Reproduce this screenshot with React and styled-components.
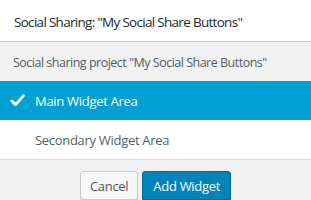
import React from 'react';
import styled, { createGlobalStyle } from 'styled-components';

const GlobalStyle = createGlobalStyle`
  html, body {
    margin: 0;
    padding: 0;
    background: #f1f1f1;
  }
  body {
    font-family: "Open Sans", "Noto Sans", sans-serif;
  }
`;

const Panel = styled.div`
  width: 311px;
  height: 200px;
  display: flex;
  flex-direction: column;
  background: #f1f1f1;
  overflow: hidden;
`;

const Header = styled.div`
  height: 42px;
  box-sizing: border-box;
  display: flex;
  align-items: center;
  padding: 2px 14px 0;
  background: #fff;
  border-bottom: 1px solid #c4c4c4;
  color: #23282d;
  font-size: 13.5px;
  letter-spacing: -0.7px;
  white-space: nowrap;
`;

const Description = styled.div`
  height: 38px;
  display: flex;
  align-items: center;
  padding: 1px 13px 0;
  color: #555d66;
  font-size: 12.5px;
  letter-spacing: -0.5px;
  white-space: nowrap;
`;

const AreaList = styled.ul`
  list-style: none;
  margin: 0;
  padding: 0;
  border-bottom: 1px solid #dcdcdc;
`;

const AreaItem = styled.li`
  height: 39px;
  display: flex;
  align-items: center;
  gap: 9px;
  padding: 0 0 0 10px;
  font-size: 13px;
  letter-spacing: -0.3px;
  background: ${props => (props.selected ? '#00a0d2' : '#fff')};
  color: ${props => (props.selected ? '#fff' : '#555d66')};

  svg {
    width: 15px;
    height: 15px;
    flex: none;
  }
`;

const CheckSlot = styled.span`
  width: 16px;
  display: flex;
  align-items: center;
`;

const Footer = styled.div`
  flex: 1;
  display: flex;
  justify-content: center;
  align-items: flex-start;
  gap: 4px;
  padding-top: 11px;
`;

const Button = styled.button`
  height: 29px;
  padding: 0 ${props => (props.primary ? '10px' : '9px')};
  border-radius: 3px;
  font-family: "Open Sans", "Noto Sans", sans-serif;
  font-size: 13px;
  letter-spacing: -0.3px;
  cursor: pointer;
  background: ${props => (props.primary ? '#0085ba' : '#f7f7f7')};
  color: ${props => (props.primary ? '#fff' : '#555')};
  border: 1px solid ${props => (props.primary ? '#006799' : '#cccccc')};
  box-shadow: ${props => (props.primary ? '0 1px 0 #006799' : '0 1px 0 #ccc')};
`;

const CheckIcon = () => (
  <svg viewBox="0 0 16 16">
    <path d="M2 8.5 L6 12.4 L14.2 3" fill="none" stroke="#fff" strokeWidth="3" strokeLinecap="round" strokeLinejoin="round" />
  </svg>
);

const areas = [
  { id: 'main', label: 'Main Widget Area' },
  { id: 'secondary', label: 'Secondary Widget Area' }
];

export default function App() {
  const selected = 'main';
  return (
    <>
      <GlobalStyle />
      <Panel>
        <Header>Social Sharing: "My Social Share Buttons"</Header>
        <Description>Social sharing project "My Social Share Buttons"</Description>
        <AreaList>
          {areas.map(area => (
            <AreaItem key={area.id} selected={selected === area.id}>
              <CheckSlot>{selected === area.id && <CheckIcon />}</CheckSlot>
              {area.label}
            </AreaItem>
          ))}
        </AreaList>
        <Footer>
          <Button>Cancel</Button>
          <Button primary>Add Widget</Button>
        </Footer>
      </Panel>
    </>
  );
}
